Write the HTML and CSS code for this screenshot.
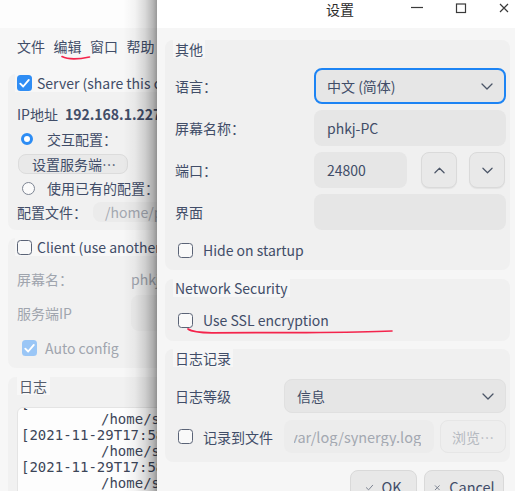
FILE: index.html
```html
<!DOCTYPE html>
<html lang="zh-CN">
<head>
<meta charset="utf-8">
<title>设置</title>
<link rel="stylesheet" href="styles.css">
</head>
<body>
<div class="screen">
  <div class="left">
    <div class="left-inner">
      <div class="ltitle"></div>
      <div class="menubar">
        <span>文件</span><span>编辑</span><span>窗口</span><span>帮助</span>
      </div>

      <div class="lgroup lg-server">
        <div class="lhead"><span class="cb cb-on"><svg viewBox="0 0 16 16"><path d="M3.5 8.2 L6.6 11.2 L12.6 4.2"/></svg></span><span>Server (share this computer's mouse and keyboard):</span></div>
        <div class="lrow ip">IP地址<b class="ipnum">192.168.1.227</b></div>
        <div class="lrow radio-row"><span class="radio radio-on"></span><span>交互配置：</span></div>
        <div class="lbtn">设置服务端…</div>
        <div class="lrow radio-row2"><span class="radio"></span><span>使用已有的配置：</span></div>
        <div class="lrow cfg"><span class="cfg-label">配置文件：</span><span class="lfield">/home/phkj/synergy.conf</span></div>
      </div>

      <div class="lgroup lg-client">
        <div class="lhead"><span class="cb"></span><span>Client (use another computer's mouse and keyboard):</span></div>
        <div class="lrow dis name-row"><span class="col114">屏幕名：</span><span>phkj-PC</span></div>
        <div class="lrow dis sip-row"><span class="col114">服务端IP</span><span class="lfield tall"></span></div>
        <div class="lrow dis auto-row"><span class="cb cb-dis"><svg viewBox="0 0 16 16"><path d="M3.5 8.2 L6.6 11.2 L12.6 4.2"/></svg></span><span>Auto config</span></div>
      </div>

      <div class="lgroup lg-log">
        <div class="lhead lhead-plain"><span>日志</span></div>
        <div class="logbox">
          <div class="logtext">
            <div class="logline">[2021-11-29T17:58:40] INFO: started server, waiting for clients</div>
            <div class="logline cont">/home/synergy/src/lib/server/Server.cpp,412</div>
            <div class="logline">[2021-11-29T17:58:41] INFO: screen "phkj-PC" shape changed</div>
            <div class="logline cont">/home/synergy/src/lib/server/Server.cpp,1877</div>
            <div class="logline">[2021-11-29T17:58:42] DEBUG: watchdog status: ok</div>
            <div class="logline cont">/home/synergy/src/lib/platform/XWindowsScreen.cpp,96</div>
          </div>
        </div>
      </div>
    </div>
    <div class="lshadow"></div>
    <svg class="mark mark-edit" viewBox="0 0 30 8"><path d="M1 2.6 C 7 5.6, 15 5.8, 28.5 3"/></svg>
  </div>

  <div class="dialog">
    <div class="dtitle">
      <span class="dtitle-text">设置</span>
      <div class="wctl">
        <svg viewBox="0 0 14 14"><path d="M1 6.5 H13"/></svg>
        <svg viewBox="0 0 14 14"><rect x="2.5" y="3" width="9" height="8.5"/></svg>
        <svg viewBox="0 0 14 14"><path d="M3 3 L11 11 M11 3 L3 11"/></svg>
      </div>
    </div>

    <div class="dbody">
      <section class="dgroup g-other">
        <div class="glabel">其他</div>
        <div class="grid1">
          <span>语言：</span>
          <div class="field combo focus"><span>中文 (简体)</span><svg class="chev" viewBox="0 0 12 7"><path d="M1 1 L6 6 L11 1"/></svg></div>
          <span>屏幕名称：</span>
          <div class="field">phkj-PC</div>
          <span>端口：</span>
          <div class="spinrow">
            <div class="field spin">24800</div>
            <div class="sbtn"><svg class="chev" viewBox="0 0 12 7"><path d="M1 6 L6 1 L11 6"/></svg></div>
            <div class="sbtn"><svg class="chev" viewBox="0 0 12 7"><path d="M1 1 L6 6 L11 1"/></svg></div>
          </div>
          <span>界面</span>
          <div class="field"></div>
        </div>
        <div class="checkrow hide-row"><span class="cb"></span><span>Hide on startup</span></div>
      </section>

      <section class="dgroup g-net">
        <div class="glabel">Network Security</div>
        <div class="checkrow ssl-row"><span class="cb"></span><span>Use SSL encryption</span></div>
      </section>

      <section class="dgroup g-log">
        <div class="glabel">日志记录</div>
        <div class="grid3">
          <span>日志等级</span>
          <div class="field combo"><span>信息</span><svg class="chev" viewBox="0 0 12 7"><path d="M1 1 L6 6 L11 1"/></svg></div>
          <div class="checkrow inrow"><span class="cb"></span><span>记录到文件</span></div>
          <div class="filerow">
            <div class="pathfield"><span class="pathclip">/var/log/synergy.log</span></div>
            <div class="browse">浏览…</div>
          </div>
        </div>
      </section>

      <div class="btnrow">
        <div class="dbtn ok"><svg class="bicon" viewBox="0 0 10 10"><path d="M1.5 5.2 L4 7.6 L8.5 2.5"/></svg><span>OK</span></div>
        <div class="dbtn cancel"><svg class="bicon" viewBox="0 0 10 10"><path d="M2.5 3 L7 7.5 M7 3 L2.5 7.5"/></svg><span>Cancel</span></div>
      </div>
    </div>
    <svg class="mark mark-ssl" viewBox="0 0 208 8"><path d="M2 2 Q 7 5.6 26 5.8 L 120 5.6 Q 180 5.2 206 4"/></svg>
  </div>
</div>
</body>
</html>
```

FILE: styles.css
```css
* { box-sizing: border-box; }

body {
  margin: 0;
  font-family: "Noto Sans CJK SC", "Noto Sans", sans-serif;
  font-size: 14px;
  line-height: 18px;
  color: #414d68;
}

.screen {
  display: flex;
  width: 515px;
  height: 491px;
  overflow: hidden;
}

/* ---------- left (background) window ---------- */
.left {
  width: 157px;
  flex: none;
  position: relative;
  overflow: hidden;
  background: #f7f7f7;
  white-space: nowrap;
}

.left-inner { width: 430px; }

.ltitle { height: 28px; background: #fdfdfd; }

.menubar {
  height: 36px;
  display: flex;
  align-items: center;
  gap: 8.5px;
  padding-left: 17px;
}

.lgroup {
  margin: 19px 0 0 8px;
  background: #f1f1f1;
  border-radius: 8px;
  padding: 0 0 8px 9px;
}

.lg-client { margin-top: 17px; padding-bottom: 11px; }
.lg-log { margin-top: 18px; padding-bottom: 0; }

.lhead {
  margin-top: -9px;
  margin-left: -2px;
  padding: 0 3px 0 2px;
  height: 18px;
  width: max-content;
  display: flex;
  align-items: center;
  gap: 5px;
  background: #f7f7f7;
}

.lhead-plain { margin-left: 0; padding-left: 2px; color: #555c6b; }

.lrow {
  height: 20px;
  display: flex;
  align-items: center;
}

.ip { margin-top: 12px; }
.ipnum { margin-left: 7px; font-weight: 700; }

.radio-row { margin-top: 5px; gap: 14px; padding-left: 4px; }
.radio-row2 { margin-top: 4px; gap: 12px; padding-left: 5px; }

.radio {
  width: 13px;
  height: 13px;
  border-radius: 50%;
  border: 1px solid #7d8593;
  background: #fbfbfb;
  flex: none;
}

.radio-on {
  width: 12px;
  height: 12px;
  border: 3.5px solid #2c8cf4;
  background: #fff;
}

.lbtn {
  margin: 5px 0 0 1px;
  width: 110px;
  height: 20px;
  padding-left: 13px;
  border: 1px solid #dcdcdc;
  border-radius: 8px;
  background: #e9e9e9;
  display: flex;
  align-items: center;
}

.cfg { margin-top: 4px; }
.cfg-label { width: 76px; flex: none; }

.lfield {
  height: 20px;
  width: 200px;
  padding-left: 12px;
  border-radius: 8px;
  background: #ebebeb;
  color: #a3a8b1;
  display: flex;
  align-items: center;
}

.lfield.tall { height: 36px; background: #ececec; }

.dis { color: #a0a5ae; }
.col114 { width: 114px; flex: none; }
.name-row { margin-top: 13px; }
.sip-row { margin-top: 6px; height: 36px; }
.auto-row { margin-top: 8px; height: 18px; padding-left: 5px; gap: 8px; }

.cb {
  width: 15px;
  height: 15px;
  flex: none;
  border: 1.5px solid #5a6376;
  border-radius: 3.5px;
  background: #f9f9f9;
  display: flex;
  align-items: center;
  justify-content: center;
}

.cb svg { width: 15px; height: 15px; }
.cb svg path { fill: none; stroke: #fff; stroke-width: 2; stroke-linecap: round; stroke-linejoin: round; }

.cb-on { border: none; background: #2f8df4; width: 15px; height: 16px; }
.cb-dis { border: none; background: #9ac6f6; width: 15px; height: 16px; }

.logbox {
  margin-top: 12px;
  height: 120px;
  background: #fdfdfd;
  border: 1px solid #e4e4e4;
  border-radius: 6px 0 0 0;
  overflow: hidden;
}

.logtext {
  margin-top: -13px;
  padding-left: 3px;
  font-family: "DejaVu Sans Mono", "Liberation Mono", monospace;
  font-size: 14px;
  line-height: 16px;
  color: #3c4558;
}

.logline { height: 16px; }
.logline.cont { padding-left: 80px; }

.lshadow {
  position: absolute;
  top: 0;
  right: 0;
  bottom: 0;
  width: 34px;
  background: linear-gradient(to right,
    rgba(0,0,0,0) 0%,
    rgba(0,0,0,0.04) 35%,
    rgba(0,0,0,0.14) 65%,
    rgba(0,0,0,0.28) 88%,
    rgba(0,0,0,0.40) 100%);
}

.mark { position: absolute; overflow: visible; }
.mark path { fill: none; stroke: #f4244c; stroke-width: 1.7; stroke-linecap: round; }
.mark-edit { left: 61px; top: 54px; width: 30px; height: 8px; }

/* ---------- dialog ---------- */
.dialog {
  flex: 1;
  position: relative;
  background: #f6f6f6;
  display: flex;
  flex-direction: column;
}

.dtitle {
  height: 28px;
  flex: none;
  background: #fff;
  display: flex;
  align-items: flex-start;
  padding: 0 4px 0 169px;
}

.dtitle-text { color: #2b2b2b; }

.wctl {
  margin-left: auto;
  display: flex;
  gap: 29.5px;
  padding-top: 1px;
}

.wctl svg { width: 14px; height: 14px; }
.wctl path, .wctl rect { fill: none; stroke: #3a3a3a; stroke-width: 1.2; }

.dbody { padding: 0 5px 0 8px; }

.dgroup {
  background: #f0f0f0;
  border-radius: 8px;
  padding: 0 4px 0 10px;
}

.g-other { margin-top: 20px; padding-bottom: 11px; }
.g-net { margin-top: 17px; padding-bottom: 12px; }
.g-log { margin-top: 16px; padding-bottom: 9px; }

.glabel {
  margin: -8px 0 0 -2px;
  padding: 0 2px;
  height: 18px;
  width: max-content;
  background: #f6f6f6;
}

.grid1 {
  margin-top: 10px;
  display: grid;
  grid-template-columns: 139px 1fr;
  grid-auto-rows: 36px;
  row-gap: 6px;
  align-items: center;
}

.field {
  height: 36px;
  border-radius: 8px;
  background: #e6e6e6;
  display: flex;
  align-items: center;
  padding-left: 13px;
}

.combo { padding: 0 11px 0 11px; }
.combo.focus { border: 2px solid #1d84f4; }
.g-log .combo { height: 34px; padding-left: 12px; border: 1px solid #e0e0e0; }

.chev { width: 12px; height: 7px; margin-left: auto; }
.chev path { fill: none; stroke: #4b5567; stroke-width: 1.3; stroke-linecap: round; stroke-linejoin: round; }

.spinrow { display: flex; align-items: center; }
.spin { width: 93px; margin-right: 14px; }

.sbtn {
  width: 36px;
  height: 36px;
  border: 1px solid #dadada;
  border-radius: 8px;
  background: #e9e9e9;
  box-shadow: 0 1px 1px rgba(0,0,0,0.06);
  display: flex;
  align-items: center;
  justify-content: center;
}

.sbtn + .sbtn { margin-left: 12px; }
.sbtn .chev { margin-left: 0; width: 11px; }

.checkrow {
  height: 18px;
  display: flex;
  align-items: center;
  gap: 10px;
  padding-left: 3px;
}

.hide-row { margin-top: 11px; }
.ssl-row { margin-top: 14px; }

.grid3 {
  margin-top: 12px;
  display: grid;
  grid-template-columns: 109px 1fr;
  grid-template-rows: 34px 33px;
  row-gap: 7px;
  align-items: center;
}

.filerow { display: flex; height: 33px; gap: 6px; min-width: 0; }

.pathfield {
  flex: 1;
  min-width: 0;
  border-radius: 8px;
  background: #ececec;
  padding-left: 10px;
  display: flex;
  align-items: center;
  overflow: hidden;
}

.pathclip {
  display: block;
  overflow: hidden;
  white-space: nowrap;
  text-indent: -9.5px;
  color: #a3a8b1;
  font-size: 14.5px;
}

.browse {
  width: 66px;
  flex: none;
  border: 1px solid #e6e6e6;
  border-radius: 8px;
  background: #eeeeee;
  color: #b5b9c0;
  display: flex;
  align-items: center;
  justify-content: center;
}

.btnrow {
  margin-top: 8px;
  display: flex;
  justify-content: flex-end;
  gap: 7px;
  padding-right: 6px;
}

.dbtn {
  height: 34px;
  border: 1px solid #d9d9d9;
  border-radius: 8px;
  background: #e8e8e8;
  display: flex;
  align-items: center;
  justify-content: center;
  gap: 7px;
  font-size: 14.5px;
}

.ok { width: 67px; }
.cancel { width: 80px; }

.bicon { width: 9px; height: 9px; }
.bicon path { fill: none; stroke: #7b8391; stroke-width: 1.1; stroke-linecap: round; }

.mark-ssl { left: 29px; top: 327px; width: 208px; height: 8px; }
```
